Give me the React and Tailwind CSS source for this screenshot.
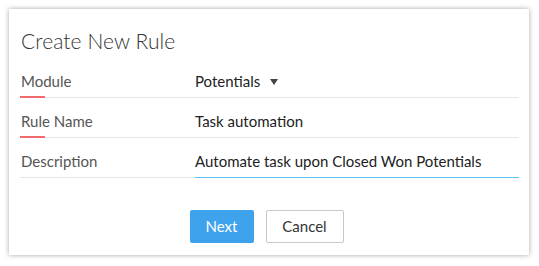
const rows = [
  { label: "Module", value: "Potentials", select: true, required: true },
  { label: "Rule Name", value: "Task automation", required: true },
  { label: "Description", value: "Automate task upon Closed Won Potentials", focused: true },
];

const App = () => {
  return (
    <div className="w-[539px] h-[266px] bg-white pt-[9px] pl-[9px] pr-[10px] font-['Lato',sans-serif]">
      <div className="h-[246px] bg-white shadow-[0_0_5px_rgba(0,0,0,0.35)] pl-[11px] pr-[10px] flex flex-col">
        <h1 className="mt-[20px] text-[21px] leading-[24px] font-light text-[#333] pl-[1px] tracking-[0.1px]">
          Create New Rule
        </h1>

        <div className="mt-[5px]">
          {rows.map((row) => (
            <div key={row.label} className="flex h-[40px]">
              <div className="w-[175px] flex flex-col justify-end border-b border-[#e6e6e6] relative">
                <span className="text-[15px] leading-[20px] text-[#555] pl-[1px] pb-[6px]">
                  {row.label}
                </span>
                {row.required && (
                  <div className="absolute left-0 bottom-[-1px] w-[25px] h-[2px] bg-[#f26b6b]" />
                )}
              </div>
              <div
                className={`flex-1 flex items-end pb-[6px] border-b ${
                  row.focused ? "border-[#5ec4f2]" : "border-[#e6e6e6]"
                }`}
              >
                <span className="text-[15px] leading-[20px] text-[#222]">{row.value}</span>
                {row.select && (
                  <svg width="8" height="6" viewBox="0 0 8 6" className="ml-[10px] mb-[6px]">
                    <path d="M0 0 L8 0 L4 6 Z" fill="#444" />
                  </svg>
                )}
              </div>
            </div>
          ))}
        </div>

        <div className="mt-[32px] flex justify-center gap-[12px] pr-[6px]">
          <button className="w-[64px] h-[33px] rounded-[2px] bg-[#3fa2ec] text-white text-[15px]">
            Next
          </button>
          <button className="w-[78px] h-[33px] rounded-[2px] bg-white border border-[#c8c8c8] text-[#333] text-[15px]">
            Cancel
          </button>
        </div>
      </div>
    </div>
  );
};

export default App;
